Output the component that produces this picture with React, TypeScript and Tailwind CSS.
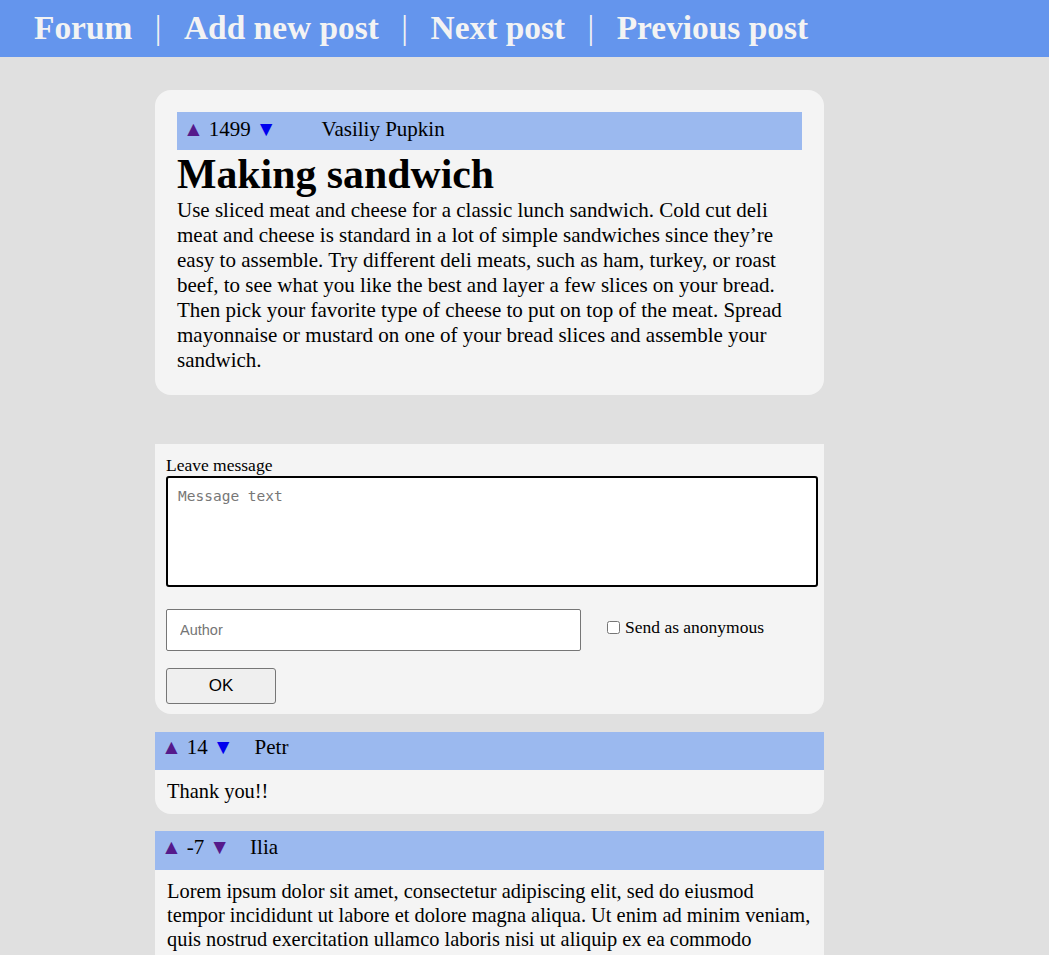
import React from 'react';

const serif = { fontFamily: '"Liberation Serif", "DejaVu Serif", serif' };

const Votes: React.FC<{ score: number; down?: 'blue' | 'purple'; nameGap: string; extra?: string; author: string }> = ({ score, down = 'blue', nameGap, extra = '', author }) => (
    <div className={`flex items-center h-[38px] bg-[#9bb9ef] text-[21px] text-black pl-[6px] ${extra}`}>
        <a href="#up" className="text-[#551a8b] no-underline text-[21px]">▲</a>
        <span className="ml-[5px]">{score}</span>
        <a href="#down" className={`ml-[5px] no-underline text-[21px] ${down === 'blue' ? 'text-[#0000ee]' : 'text-[#551a8b]'}`}>▼</a>
        <span className={nameGap}>{author}</span>
    </div>
);

const nav = ['Forum', 'Add new post', 'Next post', 'Previous post'];

export default function App() {
    return (
        <div className="min-h-screen bg-[#e0e0e0] pb-[40px]" style={serif}>
            <header className="h-[57px] bg-[#6495ed] flex items-center pl-[34px] gap-[22.5px] text-[33.4px] font-bold text-[#f3f3f3]">
                {nav.map((item, i) => (
                    <React.Fragment key={item}>
                        {i > 0 && <span className="font-normal">|</span>}
                        <a href="#" className="no-underline">{item}</a>
                    </React.Fragment>
                ))}
            </header>

            <main className="ml-[155px] w-[669px]">
                {/* Post */}
                <article className="mt-[33px] bg-[#f4f4f4] rounded-[16px] p-[22px]">
                    <Votes score={1499} nameGap="ml-[45px]" extra="pb-[3px]" author="Vasiliy Pupkin" />
                    <h1 className="text-[41.8px] font-bold leading-[48px] text-black">Making sandwich</h1>
                    <p className="text-[21px] leading-[25px] text-black">
                        Use sliced meat and cheese for a classic lunch sandwich. Cold cut deli meat and cheese is standard in a lot of simple sandwiches since they’re easy to assemble. Try different deli meats, such as ham, turkey, or roast beef, to see what you like the best and layer a few slices on your bread. Then pick your favorite type of cheese to put on top of the meat. Spread mayonnaise or mustard on one of your bread slices and assemble your sandwich.
                    </p>
                </article>

                {/* Comment form */}
                <form className="mt-[49px] bg-[#f4f4f4] rounded-b-[16px] pt-[11px] pb-[10px] pl-[11px] pr-[6px]">
                    <label className="block text-[17.5px] leading-[21px] text-black">Leave message</label>
                    <textarea
                        placeholder="Message text"
                        className="block w-[652px] h-[111px] bg-white border-2 border-black rounded-[3px] px-[10px] py-[8px] text-[14.5px] resize-none outline-none placeholder:text-[#777]"
                        style={{ fontFamily: '"DejaVu Sans Mono", "Liberation Mono", monospace' }}
                    />
                    <div className="flex items-center mt-[22px]">
                        <input
                            placeholder="Author"
                            className="w-[415px] h-[42px] bg-white border border-[#767676] rounded-[2px] px-[13px] text-[14.5px] outline-none placeholder:text-[#757575]"
                            style={{ fontFamily: '"Liberation Sans", Arial, sans-serif' }}
                        />
                        <label className="flex items-center ml-[26px] -mt-[5px] text-[17.5px] text-black">
                            <input type="checkbox" className="w-[13px] h-[13px] mr-[5px]" />
                            Send as anonymous
                        </label>
                    </div>
                    <button
                        type="button"
                        className="block mt-[17px] w-[110px] h-[36px] bg-[#efefef] border border-[#767676] rounded-[3px] text-[17px] text-black"
                        style={{ fontFamily: '"Liberation Sans", Arial, sans-serif' }}
                    >
                        OK
                    </button>
                </form>

                {/* Comments */}
                <section className="mt-[18px] bg-[#f4f4f4] rounded-b-[16px]">
                    <Votes score={14} nameGap="ml-[21px]" extra="pb-[6px]" author="Petr" />
                    <p className="px-[12px] pt-[9px] pb-[10px] text-[20.4px] leading-[25px] text-black">Thank you!!</p>
                </section>

                <section className="mt-[17px] bg-[#f4f4f4] rounded-b-[16px]">
                    <Votes score={-7} down="purple" nameGap="ml-[20px]" extra="h-[39px] pb-[6px]" author="Ilia" />
                    <p className="pl-[12px] pr-[10px] pt-[9px] pb-[10px] text-[20.4px] leading-[24px] text-black">
                        Lorem ipsum dolor sit amet, consectetur adipiscing elit, sed do eiusmod tempor incididunt ut labore et dolore magna aliqua. Ut enim ad minim veniam, quis nostrud exercitation ullamco laboris nisi ut aliquip ex ea commodo consequat. Duis aute irure dolor in reprehenderit in voluptate velit esse cillum dolore eu fugiat nulla pariatur. Excepteur sint occaecat cupidatat non proident, sunt in culpa qui officia deserunt mollit anim id est laborum.
                    </p>
                </section>
            </main>
        </div>
    );
}
